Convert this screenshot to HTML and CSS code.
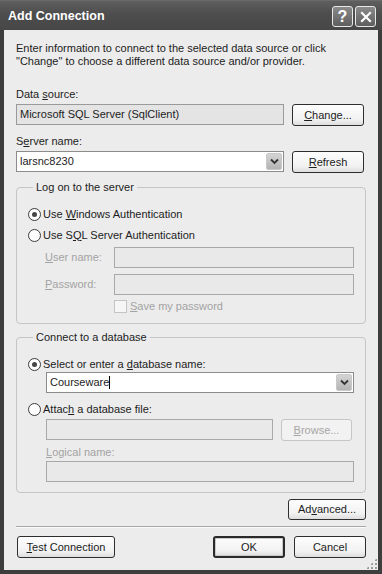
FILE: index.html
```html
<!DOCTYPE html>
<html lang="en">
<head>
  <meta charset="UTF-8">
  <title>Add Connection</title>
  <link rel="stylesheet" href="styles.css">
</head>
<body>
  <div class="window">
    <div class="titlebar">
      <span class="title">Add Connection</span>
      <div class="caption-btns">
        <span class="cap-btn">?</span>
        <span class="cap-btn">
          <svg width="12" height="12" viewBox="0 0 12 12"><path d="M2 2 L10 10 M10 2 L2 10" stroke="#fff" stroke-width="2.2" stroke-linecap="square"/></svg>
        </span>
      </div>
    </div>

    <div class="client">
      <p class="intro">Enter information to connect to the selected data source or click<br>"Change" to choose a different data source and/or provider.</p>

      <div class="field-label">Data <u>s</u>ource:</div>
      <div class="row">
        <div class="textbox readonly">Microsoft SQL Server (SqlClient)</div>
        <div class="btn"><span><u>C</u>hange...</span></div>
      </div>

      <div class="field-label second">S<u>e</u>rver name:</div>
      <div class="row">
        <div class="textbox combo">
          <span>larsnc8230</span>
          <span class="drop">
            <svg width="9" height="7" viewBox="0 0 9 7"><path d="M1 1.5 L4.5 5 L8 1.5" fill="none" stroke="#333" stroke-width="1.8"/></svg>
          </span>
        </div>
        <div class="btn"><span><u>R</u>efresh</span></div>
      </div>

      <fieldset class="group logon">
        <legend>Log on to the server</legend>
        <div class="option"><span class="radio checked"></span><span>Use <u>W</u>indows Authentication</span></div>
        <div class="option next"><span class="radio"></span><span>Use S<u>Q</u>L Server Authentication</span></div>
        <div class="cred-row first">
          <span class="dim-label"><u>U</u>ser name:</span>
          <div class="textbox disabled"></div>
        </div>
        <div class="cred-row">
          <span class="dim-label"><u>P</u>assword:</span>
          <div class="textbox disabled"></div>
        </div>
        <div class="check-row"><span class="checkbox"></span><span><u>S</u>ave my password</span></div>
      </fieldset>

      <fieldset class="group database">
        <legend>Connect to a database</legend>
        <div class="option"><span class="radio checked"></span><span>Select or enter a <u>d</u>atabase name:</span></div>
        <div class="indent">
          <div class="textbox combo">
            <span>Courseware<span class="caret"></span></span>
            <span class="drop">
              <svg width="9" height="7" viewBox="0 0 9 7"><path d="M1 1.5 L4.5 5 L8 1.5" fill="none" stroke="#333" stroke-width="1.8"/></svg>
            </span>
          </div>
        </div>
        <div class="option attach"><span class="radio"></span><span>Attac<u>h</u> a database file:</span></div>
        <div class="indent file-row">
          <div class="textbox disabled"></div>
          <div class="btn off"><span><u>B</u>rowse...</span></div>
        </div>
        <div class="indent dim-label logical"><u>L</u>ogical name:</div>
        <div class="indent">
          <div class="textbox disabled"></div>
        </div>
      </fieldset>

      <div class="advanced-row">
        <div class="btn wide"><span>Ad<u>v</u>anced...</span></div>
      </div>

      <div class="separator"></div>

      <div class="footer">
        <div class="btn test"><span><u>T</u>est Connection</span></div>
        <div class="footer-right">
          <div class="btn default">OK</div>
          <div class="btn">Cancel</div>
        </div>
      </div>
      <span class="grip"></span>
    </div>
  </div>
</body>
</html>
```

FILE: styles.css
```css
* {
  margin: 0;
  padding: 0;
  box-sizing: border-box;
}

body {
  font-family: 'Liberation Sans', Arial, sans-serif;
  font-size: 11px;
  line-height: 13px;
  color: #1c1c1c;
  background: #3a3a3a;
}

u {
  text-decoration: underline;
  text-underline-offset: 1px;
}

.window {
  width: 382px;
  height: 574px;
  background: #3d3d3d;
  display: flex;
  flex-direction: column;
  border-top: 1px solid #6a6a6a;
}

.titlebar {
  height: 29px;
  display: flex;
  align-items: center;
  justify-content: space-between;
  padding: 0 6px 0 8px;
  background: linear-gradient(#5f5f5f, #4d4d4d 45%, #474747);
}

.title {
  color: #fff;
  font-size: 12.5px;
  font-weight: bold;
  padding-top: 2px;
}

.caption-btns {
  display: flex;
  gap: 2px;
  padding-top: 2px;
}

.cap-btn {
  width: 21px;
  height: 21px;
  border: 1px solid #e8e8e8;
  border-radius: 3px;
  background: linear-gradient(#8a8a8a, #5e5e5e);
  color: #fff;
  font-size: 16px;
  font-weight: bold;
  display: flex;
  align-items: center;
  justify-content: center;
}

.client {
  flex: 1;
  margin: 0 4px 4px;
  background: #ececec;
  padding: 12px 12px 0 12px;
  position: relative;
}

.intro {
  margin-bottom: 20px;
}

.field-label.second {
  margin-top: 9px;
}

.row {
  display: flex;
  gap: 8px;
  margin-top: 3px;
  align-items: flex-start;
}

.row .textbox {
  width: 268px;
}

.textbox {
  height: 21px;
  border: 1px solid #8c8c8c;
  background: #fff;
  padding: 3px 3px 0;
  white-space: nowrap;
}

.textbox.readonly {
  background: #e4e4e4;
  border-color: #9a9a9a;
}

.textbox.disabled {
  background: #e9e9e9;
  border-color: #a9a9a9;
}

.combo {
  display: flex;
  justify-content: space-between;
  padding: 1px 1px 0 3px;
  align-items: flex-start;
}

.combo > span:first-child {
  padding-top: 2px;
}

.drop {
  width: 16px;
  height: 17px;
  background: linear-gradient(#d4d4d4, #b4b4b4);
  border: 1px solid #c8c8c8;
  border-radius: 2px;
  display: flex;
  align-items: center;
  justify-content: center;
}

.caret {
  display: inline-block;
  width: 1px;
  height: 13px;
  background: #000;
  vertical-align: -3px;
}

.btn {
  height: 22px;
  width: 72px;
  border: 1px solid #2e2e2e;
  border-radius: 3px;
  background: linear-gradient(#fdfdfd, #f2f2f2 70%, #dedede);
  display: flex;
  align-items: center;
  justify-content: center;
  white-space: nowrap;
}

.btn.off {
  width: 71px;
  color: #a6a6a6;
  border-color: #c6c6c6;
  background: #f2f2f2;
}

.btn.wide {
  width: 78px;
}

.btn.default {
  border-width: 2px;
  border-color: #2a2a2a;
  box-shadow: inset 0 0 0 1px #c9c9c9;
}

.btn.test {
  width: 98px;
}

.group {
  width: 350px;
  border: 1px solid #c5c5c5;
  border-radius: 4px;
  padding: 12px 11px 10px 11px;
}

.group legend {
  padding: 0 3px;
  margin-left: 5px;
}

.logon {
  margin-top: 8px;
}

.database {
  margin-top: 7px;
}

.option {
  height: 16px;
  display: flex;
  align-items: center;
  gap: 2px;
}

.option.next {
  margin-top: 5px;
}

.option.attach {
  margin-top: 8px;
}

.radio {
  width: 13px;
  height: 13px;
  border-radius: 50%;
  border: 1px solid #3c3c3c;
  background: #fdfdfd;
  display: inline-flex;
  align-items: center;
  justify-content: center;
}

.radio.checked::after {
  content: "";
  width: 5px;
  height: 5px;
  border-radius: 50%;
  background: #444;
}

.dim-label {
  color: #a3a3a3;
}

.cred-row {
  display: flex;
  align-items: center;
  margin-top: 6px;
  padding-left: 17px;
}

.cred-row.first {
  margin-top: 4px;
}

.cred-row .dim-label {
  width: 69px;
}

.cred-row .textbox {
  flex: 1;
}

.check-row {
  display: flex;
  align-items: center;
  gap: 3px;
  margin-top: 5px;
  padding-left: 86px;
  color: #a3a3a3;
}

.checkbox {
  width: 13px;
  height: 13px;
  border: 1px solid #c4c4c4;
  background: #f6f6f6;
}

.indent {
  padding-left: 18px;
}

.file-row {
  display: flex;
  gap: 8px;
  margin-top: 2px;
  align-items: flex-start;
}

.file-row .textbox {
  width: 227px;
}

.logical {
  margin-top: 5px;
  margin-bottom: 2px;
}

.advanced-row {
  display: flex;
  justify-content: flex-end;
  margin-top: 6px;
}

.advanced-row .btn {
  height: 21px;
}

.separator {
  width: 350px;
  margin-top: 6px;
  border-top: 1px solid #a8a8a8;
  border-bottom: 1px solid #fafafa;
}

.footer {
  display: flex;
  justify-content: space-between;
  margin-top: 8px;
  padding-left: 1px;
}

.footer-right {
  display: flex;
  gap: 9px;
}

.grip {
  position: absolute;
  right: 1px;
  bottom: 1px;
  width: 11px;
  height: 11px;
  background-image: radial-gradient(circle, #9a9a9a 1px, transparent 1.2px);
  background-size: 4px 4px;
  clip-path: polygon(100% 0, 100% 100%, 0 100%);
}
```
